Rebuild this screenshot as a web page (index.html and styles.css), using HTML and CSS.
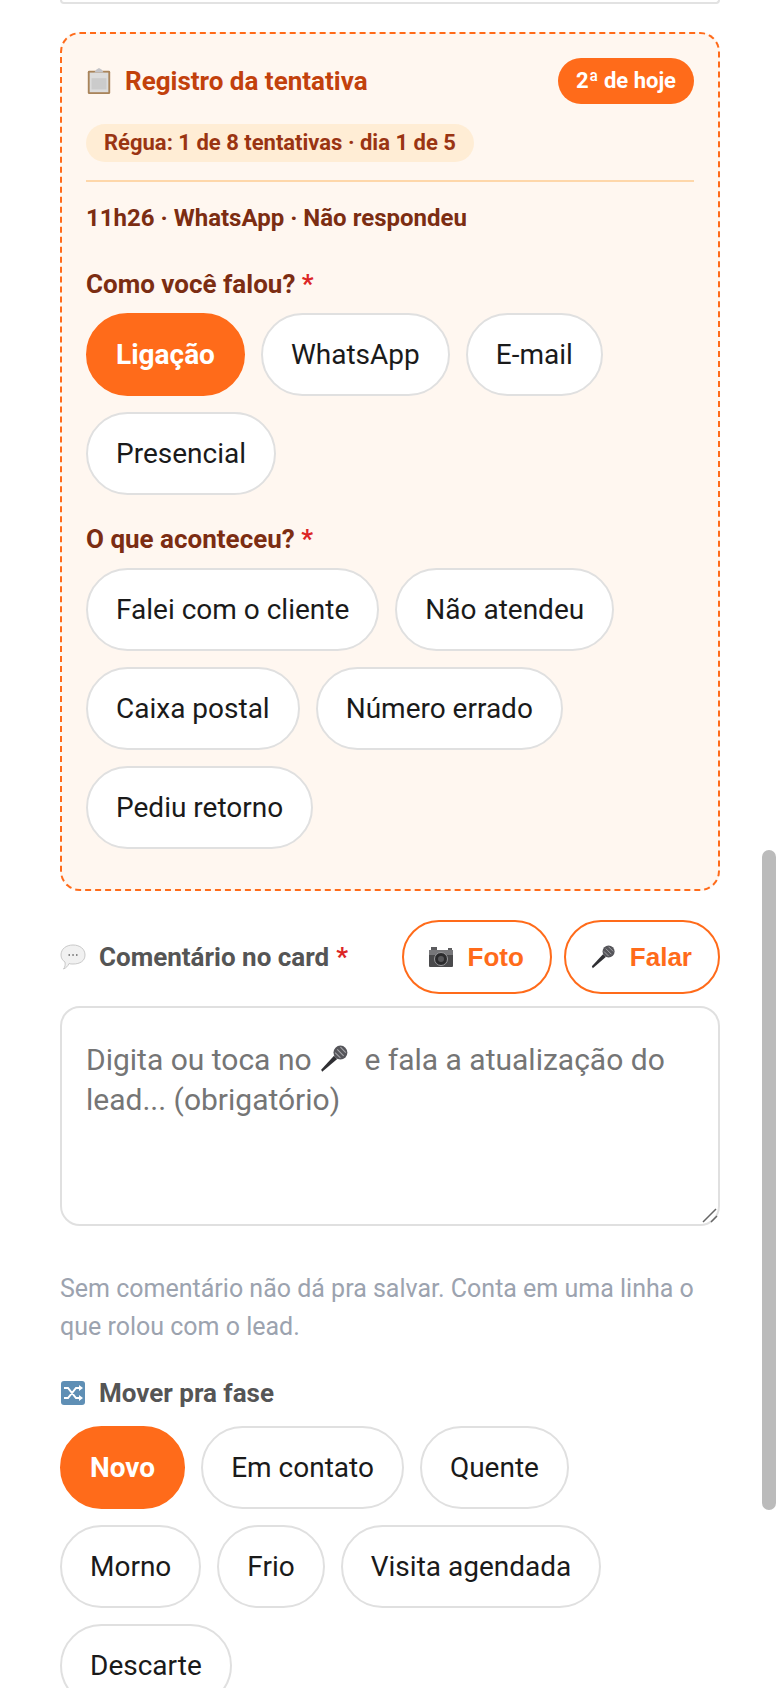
FILE: index.html
```html
<!DOCTYPE html>
<html lang="pt-BR">

<head>
    <meta charset="UTF-8">
    <title>Registro da tentativa</title>
    <link rel="stylesheet" href="styles.css">
</head>

<body class="main">
    <svg class="defs" width="0" height="0">
        <symbol id="mic" viewBox="0 0 28 28">
            <path d="M3 26 L2 24 L14 11 L17 14 Z" fill="#2f2f33"/>
            <path d="M14 11 L17 14 L18 13 L15 10 Z" fill="#8a8a8e"/>
            <circle cx="20" cy="8" r="6.5" fill="#55555a"/>
            <path d="M17 5 L23 11 M20 3 L25 8 M15 8 L20 13" stroke="#a5a5a9" stroke-width="1"/>
        </symbol>
    </svg>
    <div class="prev_card"></div>
    <section class="attempt">
        <div class="attempt__head">
            <h2 class="attempt__title">
                <svg class="icon" viewBox="0 0 26 30">
                    <rect x="1" y="4" width="24" height="25" rx="1.5" fill="#a9845a"/>
                    <rect x="3" y="6" width="20" height="21" fill="#dcdcdc"/>
                    <rect x="5" y="12" width="16" height="12" fill="#cbcbcb"/>
                    <path d="M8 6 L10 3 L13 1 L16 3 L18 6 Z" fill="#c4c4c8"/>
                </svg>
                Registro da tentativa
            </h2>
            <span class="attempt__count">2ª de hoje</span>
        </div>
        <div class="attempt__rule">Régua: 1 de 8 tentativas · dia 1 de 5</div>
        <div class="attempt__last">11h26 · WhatsApp · Não respondeu</div>
        <h3 class="attempt__label">Como você falou? <span class="req">*</span></h3>
        <div class="chips">
            <button class="chip chip--on">Ligação</button>
            <button class="chip">WhatsApp</button>
            <button class="chip">E-mail</button>
            <button class="chip">Presencial</button>
        </div>
        <h3 class="attempt__label">O que aconteceu? <span class="req">*</span></h3>
        <div class="chips">
            <button class="chip">Falei com o cliente</button>
            <button class="chip">Não atendeu</button>
            <button class="chip">Caixa postal</button>
            <button class="chip">Número errado</button>
            <button class="chip">Pediu retorno</button>
        </div>
    </section>
    <div class="comment_head">
        <h3 class="field_label">
            <svg class="icon" viewBox="0 0 26 28">
                <path d="M13 2 C20 2 25 6 25 12 C25 18 20 21 13 21 C11.500 21 10 21 9 20.500 C8 23 6 25 3.500 26 C5 24 5.500 22 5 19 C2.500 17.500 1 15 1 12 C1 6 6 2 13 2 Z" fill="#f1f1f1" stroke="#c9c9c9"/>
                <path d="M8.500 12 H10 M12.300 12 H13.800 M16 12 H17.500" stroke="#666" stroke-width="1.500"/>
            </svg>
            Comentário no card <span class="req">*</span>
        </h3>
        <div class="comment_head__btns">
            <button class="outline">
                <svg class="icon" viewBox="0 0 26 24">
                    <rect x="1" y="5" width="24" height="17" rx="1" fill="#4a4a4c"/>
                    <rect x="1" y="5" width="24" height="5" fill="#77777a"/>
                    <rect x="3" y="2" width="6" height="3" fill="#5c5c5f"/>
                    <rect x="20" y="3" width="4" height="2" fill="#5c5c5f"/>
                    <circle cx="13" cy="14" r="6.500" fill="#2b2b2d" stroke="#9a9a9d"/>
                    <circle cx="13" cy="14" r="3" fill="#57575a"/>
                </svg>
                Foto
            </button>
            <button class="outline">
                <svg class="icon"><use href="#mic"/></svg>
                Falar
            </button>
        </div>
    </div>
    <div class="comment" role="textbox">
        Digita ou toca no <svg class="comment__mic"><use href="#mic"/></svg> e fala a atualização do<br>
        lead... (obrigatório)
        <svg class="comment__grip" viewBox="0 0 16 16">
            <path d="M1 15 L14 2 M9 15 L15 9" stroke="#666" stroke-width="1.500"/>
        </svg>
    </div>
    <p class="hint">Sem comentário não dá pra salvar. Conta em uma linha o<br>que rolou com o lead.</p>
    <h3 class="field_label field_label--phase">
        <svg class="icon" viewBox="0 0 26 26">
            <rect x="1" y="1" width="24" height="24" rx="3" fill="#5f8fb5"/>
            <path d="M4 8 H8 L16 18 H20 M4 18 H8 L16 8 H20" fill="none" stroke="#fff" stroke-width="2"/>
            <path d="M19 5 L23 8 L19 11 Z M19 15 L23 18 L19 21 Z" fill="#fff"/>
        </svg>
        Mover pra fase
    </h3>
    <div class="chips">
        <button class="chip chip--on">Novo</button>
        <button class="chip">Em contato</button>
        <button class="chip">Quente</button>
        <button class="chip">Morno</button>
        <button class="chip">Frio</button>
        <button class="chip">Visita agendada</button>
        <button class="chip">Descarte</button>
    </div>
    <div class="scrollbar"></div>
</body>

</html>
```
FILE: styles.css
```css
html, body {
    margin: 0;
    height: 1688px;
    overflow: hidden;
}
.main {
    position: relative;
    box-sizing: border-box;
    padding: 0 60px;
    background: #fff;
    font-family: Roboto, "Noto Sans", sans-serif;
    color: #1a1a1a;
}
h2, h3, p {
    margin: 0;
}
button {
    font-family: inherit;
}
.defs {
    position: absolute;
}
.icon {
    flex: none;
    width: 26px;
    height: 28px;
}
.prev_card {
    height: 4px;
    margin-bottom: 28px;
    box-sizing: border-box;
    border: 2px solid #e2e2e2;
    border-top: none;
    border-radius: 0 0 20px 20px;
}
.attempt {
    box-sizing: border-box;
    padding: 24px 24px 40px;
    background: #fff7f0;
    border: 2px dashed #ff6b1a;
    border-radius: 20px;
}
.attempt__head {
    display: flex;
    justify-content: space-between;
    align-items: center;
}
.attempt__title {
    display: flex;
    align-items: center;
    gap: 13px;
    font-size: 26px;
    font-weight: 700;
    color: #c2410c;
}
.attempt__count {
    padding: 10px 18px;
    background: #ff6b1a;
    color: #fff;
    font-size: 22px;
    font-weight: 700;
    line-height: 26px;
    border-radius: 24px;
}
.attempt__rule {
    width: fit-content;
    margin-top: 20px;
    padding: 8px 18px;
    background: #ffedd5;
    color: #9a3412;
    font-size: 22px;
    font-weight: 700;
    line-height: 22px;
    border-radius: 20px;
}
.attempt__last {
    margin: 18px 0 37px;
    padding-top: 22px;
    border-top: 2px solid #fed7aa;
    color: #7c2d12;
    font-size: 24px;
    font-weight: 700;
}
.attempt__label {
    margin: 29px 0 14px;
    color: #7c2d12;
    font-size: 26px;
    font-weight: 700;
}
.req {
    color: #dc2626;
}
.chips {
    display: flex;
    flex-wrap: wrap;
    gap: 16px;
}
.chip {
    height: 83px;
    padding: 0 28px;
    background: #fff;
    color: #1a1a1a;
    border: 2px solid #e0e0e0;
    border-radius: 42px;
    font-size: 28px;
}
.chip--on {
    background: #ff6b1a;
    color: #fff;
    border-color: #ff6b1a;
    font-weight: 700;
}
.comment_head {
    display: flex;
    justify-content: space-between;
    align-items: center;
    margin: 29px 0 12px;
}
.comment_head__btns {
    display: flex;
    gap: 12px;
}
.field_label {
    display: flex;
    align-items: center;
    gap: 13px;
    color: #555;
    font-size: 26px;
    font-weight: 700;
}
.field_label .req {
    margin-left: -6px;
}
.field_label--phase {
    margin: 32px 0 18px;
}
.outline {
    display: flex;
    align-items: center;
    gap: 14px;
    height: 74px;
    padding: 0 26px 0 24px;
    background: #fff;
    color: #ff6b1a;
    border: 2px solid #ff6b1a;
    border-radius: 37px;
    font-family: "Liberation Sans", sans-serif;
    font-size: 26px;
    font-weight: 700;
}
.comment {
    position: relative;
    box-sizing: border-box;
    height: 220px;
    padding: 32px 24px 0;
    border: 2px solid #e0e0e0;
    border-radius: 20px;
    color: #757575;
    font-size: 30px;
    line-height: 40px;
}
.comment__mic {
    width: 30px;
    height: 30px;
    margin-right: 8px;
    vertical-align: -4px;
}
.comment__grip {
    position: absolute;
    right: 0;
    bottom: 1px;
    width: 16px;
    height: 16px;
}
.hint {
    margin-top: 44px;
    color: #9ca3af;
    font-size: 25px;
    line-height: 38px;
}
.scrollbar {
    position: absolute;
    top: 850px;
    right: 4px;
    width: 14px;
    height: 660px;
    background: #bbb;
    border-radius: 7px;
}
```
